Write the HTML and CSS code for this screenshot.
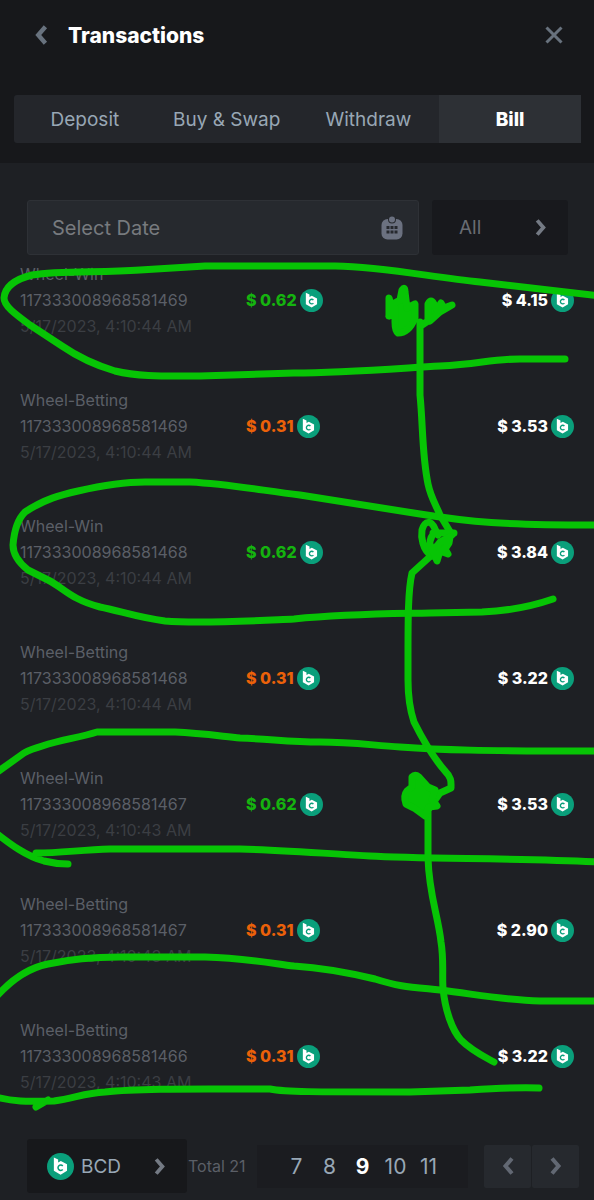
FILE: index.html
```html
<!DOCTYPE html>
<html lang="en">
<head>
    <meta charset="UTF-8">
    <meta name="viewport" content="width=device-width, initial-scale=1.0">
    <title>Transactions</title>
    <link rel="stylesheet" href="styles.css">
</head>
<body>

    <!-- Shared icons -->
    <svg class="sprite" aria-hidden="true">
        <symbol id="coin" viewBox="0 0 24 24">
            <circle cx="12" cy="12" r="12" fill="#0a9f7b"/>
            <path d="M6.1 4 9.900 5.700v2.700l2.400-1.300 5.500 2.900v5.800L12.100 19.300l-6-3.500z" fill="#fff"/>
            <path d="M14 11.500A2.400 2.400 0 1 0 14 14.700" fill="none" stroke="#0a9f7b" stroke-width="1.400"/>
        </symbol>
        <symbol id="left" viewBox="0 0 12 20">
            <path d="M10 2.500 3.500 10l6.500 7.500" fill="none" stroke="currentColor" stroke-width="4"/>
        </symbol>
        <symbol id="right" viewBox="0 0 12 20">
            <path d="M2 2.500 8.500 10 2 17.500" fill="none" stroke="currentColor" stroke-width="4"/>
        </symbol>
    </svg>

    <header class="header">
        <div class="title-bar">
            <button type="button" class="icon-btn" aria-label="Back"><svg class="back-icon"><use href="#left"/></svg></button>
            <h1>Transactions</h1>
            <button type="button" class="icon-btn" aria-label="Close">
                <svg class="close-icon" viewBox="0 0 18 18"><path d="M1.500 1.500l15 15M16.500 1.500l-15 15" stroke="currentColor" stroke-width="3"/></svg>
            </button>
        </div>
        <nav class="tabs">
            <a href="#deposit">Deposit</a>
            <a href="#swap">Buy &amp; Swap</a>
            <a href="#withdraw">Withdraw</a>
            <a href="#bill" class="active">Bill</a>
        </nav>
    </header>

    <main>
        <form class="filters">
            <div class="date-box">
                <input type="text" id="date" placeholder="Select Date" aria-label="Select Date">
                <svg class="calendar-icon" viewBox="0 0 22 24">
                    <rect x="0.500" y="3" width="21" height="20.500" rx="6" fill="#6b7180"/>
                    <circle cx="11" cy="3.500" r="4" fill="#26292e"/>
                    <circle cx="11" cy="3.500" r="3" fill="#6b7180"/>
                    <path d="M5.500 10h3v3h-3zM9.500 10h3v3h-3zM13.500 10h3v3h-3zM5.500 14.500h3v3h-3zM9.500 14.500h3v3h-3zM13.500 14.500h3v3h-3z" fill="#26292e"/>
                </svg>
            </div>
            <div class="type-box">
                <select id="type" aria-label="Type">
                    <option>All</option>
                </select>
                <svg class="arrow"><use href="#right"/></svg>
            </div>
        </form>

        <table class="bills">
            <tbody>
                <tr>
                    <td class="info">Wheel-Win<br>117333008968581469<br><time>5/17/2023, 4:10:44 AM</time></td>
                    <td class="win"><span class="money">$ 0.62 <svg><use href="#coin"/></svg></span></td>
                    <td class="balance"><span class="money">$ 4.15 <svg><use href="#coin"/></svg></span></td>
                </tr>
                <tr>
                    <td class="info">Wheel-Betting<br>117333008968581469<br><time>5/17/2023, 4:10:44 AM</time></td>
                    <td class="bet"><span class="money">$ 0.31 <svg><use href="#coin"/></svg></span></td>
                    <td class="balance"><span class="money">$ 3.53 <svg><use href="#coin"/></svg></span></td>
                </tr>
                <tr>
                    <td class="info">Wheel-Win<br>117333008968581468<br><time>5/17/2023, 4:10:44 AM</time></td>
                    <td class="win"><span class="money">$ 0.62 <svg><use href="#coin"/></svg></span></td>
                    <td class="balance"><span class="money">$ 3.84 <svg><use href="#coin"/></svg></span></td>
                </tr>
                <tr>
                    <td class="info">Wheel-Betting<br>117333008968581468<br><time>5/17/2023, 4:10:44 AM</time></td>
                    <td class="bet"><span class="money">$ 0.31 <svg><use href="#coin"/></svg></span></td>
                    <td class="balance"><span class="money">$ 3.22 <svg><use href="#coin"/></svg></span></td>
                </tr>
                <tr>
                    <td class="info">Wheel-Win<br>117333008968581467<br><time>5/17/2023, 4:10:43 AM</time></td>
                    <td class="win"><span class="money">$ 0.62 <svg><use href="#coin"/></svg></span></td>
                    <td class="balance"><span class="money">$ 3.53 <svg><use href="#coin"/></svg></span></td>
                </tr>
                <tr>
                    <td class="info">Wheel-Betting<br>117333008968581467<br><time>5/17/2023, 4:10:43 AM</time></td>
                    <td class="bet"><span class="money">$ 0.31 <svg><use href="#coin"/></svg></span></td>
                    <td class="balance"><span class="money">$ 2.90 <svg><use href="#coin"/></svg></span></td>
                </tr>
                <tr>
                    <td class="info">Wheel-Betting<br>117333008968581466<br><time>5/17/2023, 4:10:43 AM</time></td>
                    <td class="bet"><span class="money">$ 0.31 <svg><use href="#coin"/></svg></span></td>
                    <td class="balance"><span class="money">$ 3.22 <svg><use href="#coin"/></svg></span></td>
                </tr>
            </tbody>
        </table>
    </main>

    <footer class="footer">
        <div class="coin-box">
            <svg class="coin-icon"><use href="#coin"/></svg>
            <select id="currency" aria-label="Currency">
                <option>BCD</option>
            </select>
            <svg class="arrow"><use href="#right"/></svg>
        </div>
        <span class="total">Total 21</span>
        <nav class="pages" aria-label="Pages">
            <a href="#7">7</a>
            <a href="#8">8</a>
            <a href="#9" class="current">9</a>
            <a href="#10">10</a>
            <a href="#11">11</a>
        </nav>
        <div class="pager">
            <button type="button" aria-label="Previous page"><svg class="arrow"><use href="#left"/></svg></button>
            <button type="button" aria-label="Next page"><svg class="arrow"><use href="#right"/></svg></button>
        </div>
    </footer>

    <!-- Freehand pen marks over the list -->
    <svg class="pen" viewBox="0 0 594 1200" aria-hidden="true">
        <!-- circled rows -->
        <path d="M565 359H520C490 359 480 364 440 366C390 369 340 373 294 373L200 376C165 376 140 377 115 371C95 365 78 357 62 346L30 325C15 314 4 306 4 298C5 286 16 279 32 275C60 270 100 273 140 270L205 266H335C385 267 430 277 480 282L600 296"/>
        <path d="M553 599C530 607 505 611 482 612L430 613C380 614 345 614 294 619C250 621 200 624 165 621C140 618 120 611 100 607C70 599 64 588 48 580L28 570C18 562 13 554 13 545C14 532 17 520 25 512C45 499 60 495 78 491C100 486 120 482 145 482H190C230 484 265 491 300 495L420 514C470 522 500 525 600 525"/>
        <path d="M-4 773L24 753C45 742 75 739 97 732H175C200 733 220 736 240 738C270 739 290 742 320 742C350 742 370 745 400 747C440 750 480 751 600 751"/>
        <path d="M-4 833C10 844 26 856 44 861C52 863 60 864 68 864M36 853C60 853 80 850 110 849H240C280 850 320 853 370 856C420 859 520 858 600 862"/>
        <path d="M-4 997C12 979 28 968 48 964C75 958 95 957 120 957H205C245 958 270 963 294 966C325 968 350 973 375 979C400 987 410 987 440 990C480 995 505 1000 540 1001H600"/>
        <path d="M-4 1097C18 1103 35 1101 54 1101C75 1098 85 1093 105 1092C140 1088 200 1089 270 1089C285 1092 310 1092 410 1092L470 1090C500 1088 515 1087 539 1088M36 1107L48 1100"/>
        <!-- line through the balances -->
        <path d="M420 322V395C423 425 422 455 428 484C431 498 436 505 440 515L452 535"/>
        <path d="M434 553L412 573C408 590 408 620 408 655V680C408 695 410 710 414 722C424 742 432 756 445 771C452 778 451 782 451 788L440 793L428 810V858C429 895 438 915 441 942C444 960 442 975 443 988C445 1010 452 1030 461 1040C472 1051 483 1056 494 1062"/>
        <!-- scribbles -->
        <path class="filled" d="M389 316V298L391 305L400 300L402 290Q405 286 405 292L407 308L415 304V318C411 328 405 333 398 333Q395 331 395 322V308L389 316"/>
        <path class="filled" d="M422 325L428 321L428 304Q431 298 434 304L437 310L441 303L444 308L452 305L440 312L430 321"/>
        <path d="M432 556C422 550 421 536 422 530C425 520 431 520 435 529L438 535M433 533H454M434 533C430 538 429 544 431 549"/>
        <path class="filled" d="M437 546L440 542L450 537L449 543L445 549L448 554L440 551L437 561L432 549Z"/>
        <path class="filled" d="M412 777Q415 774 419 777L428 787L435 790L432 799L437 806L429 807L425 816L414 808L406 804Q403 796 407 791L412 787Z"/>
    </svg>

</body>
</html>
```

FILE: styles.css
```css
/* Global Styles */
* {
    box-sizing: border-box;
}

body {
    position: relative;
    overflow-x: hidden;
    margin: 0;
    font-family: Inter, sans-serif;
    background-color: #1e2024;
    color: #98a7b5;
}

a {
    color: inherit;
    text-decoration: none;
}

button,
select,
input {
    font: inherit;
    color: inherit;
    border: none;
    background: none;
    padding: 0;
    margin: 0;
}

select {
    appearance: none;
    flex: 1;
    min-width: 0;
}

.sprite {
    display: none;
}

.arrow {
    width: 12px;
    height: 19px;
    color: #747a84;
}

/* Header */
.header {
    background-color: #17181b;
    padding: 11px 13px 20px 14px;
}

.title-bar {
    display: flex;
    align-items: center;
    height: 48px;
    padding: 0 18px;
    margin-bottom: 36px;
}

.title-bar h1 {
    flex: 1;
    margin: 0 0 0 18px;
    font-size: 21px;
    font-weight: 800;
    color: #fff;
}

.icon-btn {
    display: flex;
    color: #68727e;
}

.back-icon {
    width: 18px;
    height: 22px;
}

.close-icon {
    width: 18px;
    height: 18px;
}

.tabs {
    display: flex;
    height: 48px;
    background-color: #24262b;
    border-radius: 3px;
    font-size: 19px;
}

.tabs a {
    flex: 1;
    display: flex;
    align-items: center;
    justify-content: center;
    white-space: nowrap;
}

.tabs .active {
    background-color: #2d3035;
    color: #fff;
    font-weight: 800;
}

/* Filters */
.filters {
    display: flex;
    gap: 13px;
    padding: 37px 26px 6px 27px;
}

.date-box,
.type-box {
    display: flex;
    align-items: center;
    height: 55px;
    border-radius: 3px;
    font-size: 19px;
}

.date-box {
    flex: 1;
    padding: 0 15px 0 24px;
    background-color: #26292e;
    border: 1px solid #2e3136;
    font-size: 20px;
}

.date-box input {
    flex: 1;
    min-width: 0;
}

.date-box input::placeholder {
    color: #777a7e;
    opacity: 1;
}

.calendar-icon {
    width: 22px;
    height: 24px;
}

.type-box {
    width: 136px;
    padding: 0 21px 0 27px;
    background-color: #18191d;
    color: #686c72;
}

/* Bill list */
.bills {
    width: 100%;
    border-spacing: 0;
    font-size: 16px;
    line-height: 26px;
}

.bills td {
    padding: 0 0 48px;
}

.bills tr:last-child td {
    padding-bottom: 44px;
}

.bills .info {
    width: 246px;
    padding-left: 20px;
    color: #5b5f67;
}

.info time {
    color: #3b3e43;
}

.money {
    display: inline-flex;
    align-items: center;
    gap: 3px;
    font-weight: 800;
}

.money svg {
    width: 23px;
    height: 23px;
}

.win {
    color: #15b30f;
}

.bet {
    color: #eb6109;
}

.bills .balance {
    padding-right: 20px;
    text-align: right;
    color: #fff;
}

/* Footer */
.footer {
    display: flex;
    align-items: center;
    padding: 0 15px 7px 27px;
}

.coin-box {
    display: flex;
    align-items: center;
    gap: 7px;
    width: 160px;
    height: 54px;
    padding: 0 21px 0 20px;
    border-radius: 3px;
    background-color: #17181b;
    font-size: 19px;
}

.coin-icon {
    width: 27px;
    height: 27px;
}

.total {
    flex: 1;
    padding-left: 1px;
    font-size: 16px;
    color: #5b5f67;
    white-space: nowrap;
}

.pages {
    display: flex;
    align-items: center;
    height: 43px;
    padding: 0 23px;
    background-color: #1b1c20;
    font-size: 21px;
}

.pages a {
    width: 33px;
    text-align: center;
}

.pages .current {
    color: #fff;
    font-weight: 700;
}

.pager {
    display: flex;
    gap: 1px;
    margin-left: 16px;
}

.pager button {
    display: flex;
    align-items: center;
    justify-content: center;
    width: 47px;
    height: 43px;
    border-radius: 2px;
    background-color: #26292e;
}

.pager .arrow {
    height: 20px;
    color: #626873;
}

/* Pen marks */
.pen {
    position: absolute;
    top: 0;
    left: 0;
    width: 594px;
    height: 1200px;
    pointer-events: none;
    fill: none;
    stroke: #07c405;
    stroke-width: 7;
    stroke-linecap: round;
    stroke-linejoin: round;
}

.pen .filled {
    fill: #07c405;
}
```
